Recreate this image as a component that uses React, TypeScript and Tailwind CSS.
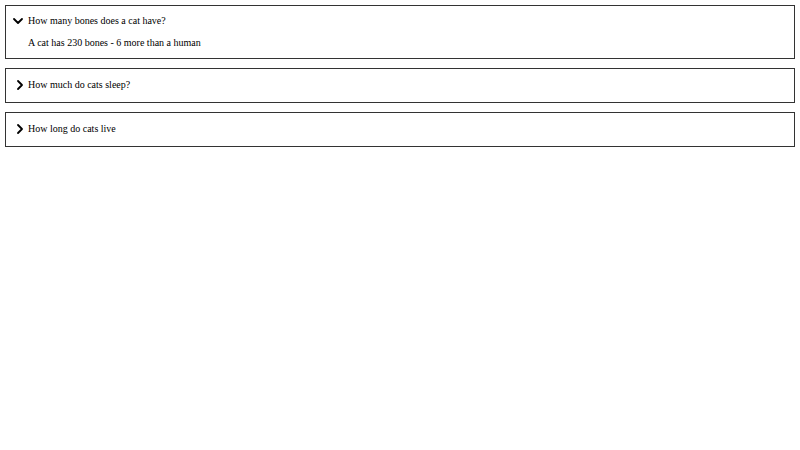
import React, { useState } from 'react';
import { ChevronDown, ChevronRight } from 'lucide-react';

const ITEMS = [
  { id: 'bones', q: 'How many bones does a cat have?', a: 'A cat has 230 bones - 6 more than a human' },
  { id: 'sleep', q: 'How much do cats sleep?', a: 'Cats sleep 12 - 16 hours a day' },
  { id: 'live', q: 'How long do cats live', a: 'Around 15 years on average' },
];

export default function App() {
  const [open, setOpen] = useState<string | null>('bones');

  return (
    <div className="flex flex-col gap-[9px] p-[5px] text-[10px] text-black bg-white min-h-[450px]" style={{ fontFamily: '"Liberation Serif", serif' }}>
      {ITEMS.map(item => {
        const isOpen = open === item.id;
        return (
          <div key={item.id} className={`border border-[#333] pl-[5px] pr-2 ${isOpen ? 'pt-[7px] pb-[8px]' : 'pt-2 pb-[9px]'}`}>
            <button
              onClick={() => setOpen(isOpen ? null : item.id)}
              className="flex items-center h-4 w-full text-left"
            >
              {isOpen
                ? <ChevronDown className="w-4 h-4 -ml-px mr-[2px]" strokeWidth={2.75} />
                : <ChevronRight className="w-4 h-4 ml-px" strokeWidth={2.75} />}
              <span className="leading-[14px]">{item.q}</span>
            </button>
            {isOpen && <p className="mt-[7px] pl-[17px] leading-[14px]">{item.a}</p>}
          </div>
        );
      })}
    </div>
  );
}
